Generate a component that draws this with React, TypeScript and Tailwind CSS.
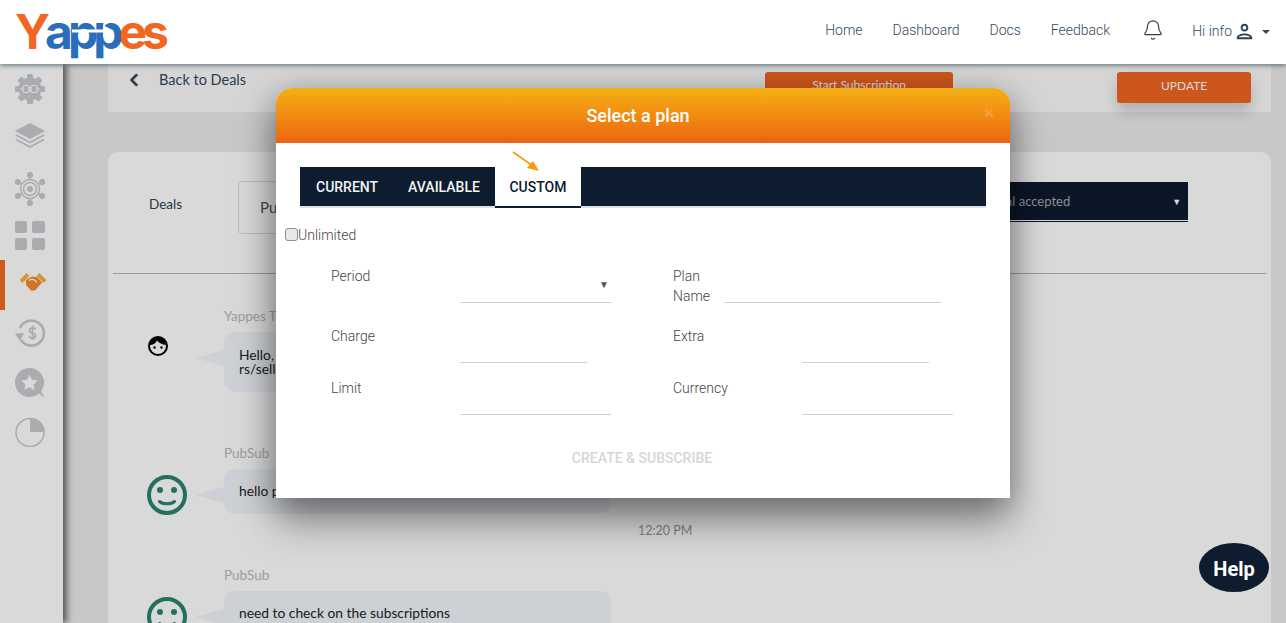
import { Bell, ChevronLeft } from "lucide-react";
import { MdOutlinePerson } from "react-icons/md";

const nav = ["Home", "Dashboard", "Docs", "Feedback"];

function Logo() {
  return (
    <div className="relative h-[64px] w-[165px] pl-[15px] font-['Inter',sans-serif]">
      <div className="flex pt-[2px] text-[48px] font-bold leading-[60px] tracking-[-5px]">
        <span className="text-[#f26522]">Y</span>
        <span className="text-[#2a6ebb]">app</span>
        <span className="text-[#f26522]">es</span>
      </div>
      <svg className="absolute left-[70px] top-[24px]" width="50" height="14" viewBox="0 0 50 14">
        <path d="M2 7H36" stroke="#fff" strokeWidth="3" />
        <path d="M33 1L44 7L33 13Z" fill="#fff" />
      </svg>
    </div>
  );
}

function GearIcon() {
  const teeth = [0, 45, 90, 135, 180, 225, 270, 315];
  return (
    <svg width="30" height="30" viewBox="0 0 30 30">
      {teeth.map((t) => (
        <rect key={t} x="12" y="0" width="6" height="7" rx="1.5" fill="#c8cace" transform={`rotate(${t} 15 15)`} />
      ))}
      <circle cx="15" cy="15" r="11.5" fill="#c8cace" />
      <rect x="8" y="11.5" width="6" height="7" rx="2" fill="none" stroke="#fff" strokeWidth="1.2" />
      <rect x="16" y="11.5" width="6" height="7" rx="2" fill="none" stroke="#fff" strokeWidth="1.2" />
      <path d="M5 15H8M14 13.5H16M14 16.5H16M22 15H25" stroke="#fff" strokeWidth="1.2" />
    </svg>
  );
}

function LayersIcon() {
  return (
    <svg width="30" height="25" viewBox="0 0 30 25">
      <path d="M15 0L30 8L15 16L0 8Z" fill="#c8cace" />
      <path d="M2 11.5L15 18.5L28 11.5L30 12.6L15 20.5L0 12.6Z" fill="#c8cace" />
      <path d="M2 16L15 23L28 16L30 17.1L15 25L0 17.1Z" fill="#c8cace" />
    </svg>
  );
}

function HubIcon() {
  const arms = [0, 60, 120, 180, 240, 300];
  return (
    <svg width="30" height="34" viewBox="0 0 30 34">
      {arms.map((a) => (
        <g key={a} transform={`rotate(${a} 15 17)`}>
          <path d="M15 17V4" stroke="#c8cace" strokeWidth="1.5" />
          <circle cx="15" cy="3" r="3" fill="#c8cace" />
        </g>
      ))}
      <circle cx="15" cy="17" r="9.5" fill="#fff" stroke="#c8cace" strokeWidth="1.5" />
      <circle cx="15" cy="17" r="6.5" fill="none" stroke="#c8cace" strokeWidth="1.5" />
      <circle cx="15" cy="17" r="3" fill="#c8cace" />
    </svg>
  );
}

function GridIcon() {
  return (
    <div className="grid w-[30px] grid-cols-[12px_13px] gap-x-[5px] gap-y-[5px]">
      <div className="h-[12px] rounded-[2px] bg-[#c8cace]" />
      <div className="h-[12px] rounded-[2px] bg-[#c8cace]" />
      <div className="h-[12px] rounded-[2px] bg-[#c8cace]" />
      <div className="h-[12px] rounded-[2px] bg-[#c8cace]" />
    </div>
  );
}

function HandshakeIcon() {
  return (
    <svg width="26" height="18" viewBox="0 0 26 18">
      <path d="M1 8.5L8 1.5" stroke="#fbb03b" strokeWidth="4" />
      <path d="M25 8.5L18 1.5" stroke="#fbb03b" strokeWidth="4" />
      <path d="M6 7L12 3.5L17 4L22 9.5L15 17.5H11L6 12Z" fill="#f58a2e" />
      <path d="M9 7.5C12 5.5 15.5 6.5 17 9.5" fill="none" stroke="#fff" strokeWidth="1.2" />
    </svg>
  );
}

function DollarIcon() {
  return (
    <svg width="30" height="28" viewBox="0 0 30 28">
      <path d="M5 9A12.5 12.5 0 1 1 6 21" fill="none" stroke="#c8cace" strokeWidth="2.6" />
      <path d="M0 14.5L9 14L5 22Z" fill="#c8cace" />
      <path d="M20.5 10.5C19.5 8.5 14.5 8.5 14.5 11.5C14.5 14.5 20.5 13.5 20.5 16.8C20.5 19.6 15.2 19.6 14 17.4" fill="none" stroke="#c8cace" strokeWidth="2" />
      <path d="M17.5 6.5V21" stroke="#c8cace" strokeWidth="1.6" />
    </svg>
  );
}

function StarBubbleIcon() {
  return (
    <svg width="30" height="30" viewBox="0 0 30 30">
      <path d="M22 24L30 30L24 20Z" fill="#c8cace" />
      <circle cx="14.5" cy="14.5" r="14.5" fill="#c8cace" />
      <path d="M14.5 6.5L17 11.8L22.8 12.5L18.5 16.4L19.7 22L14.5 19.2L9.3 22L10.5 16.4L6.2 12.5L12 11.8Z" fill="#fff" />
    </svg>
  );
}

function PieIcon() {
  return (
    <svg width="30" height="30" viewBox="0 0 30 30">
      <circle cx="15" cy="15.5" r="14" fill="none" stroke="#c8cace" strokeWidth="1.5" />
      <path d="M15 1A14 14 0 0 1 29.5 15H15Z" fill="#c8cace" />
    </svg>
  );
}

function Sidebar() {
  return (
    <aside className="relative z-[1] flex h-[559px] w-[63px] shrink-0 flex-col items-center bg-white pr-[3px] pt-[10px] shadow-[4px_0_6px_rgba(0,0,0,0.55)]">
      <GearIcon />
      <div className="mt-[19px] flex">
        <LayersIcon />
      </div>
      <div className="mt-[24px] flex">
        <HubIcon />
      </div>
      <div className="mt-[15px]">
        <GridIcon />
      </div>
      <div className="mt-[10px] flex h-[50px] w-[63px] shrink-0 items-center self-start border-l-[5px] border-[#f26a21] pl-[15px]">
        <div className="-mt-[6px] flex">
          <HandshakeIcon />
        </div>
      </div>
      <div className="mt-[9px] flex">
        <DollarIcon />
      </div>
      <div className="mt-[21px] flex">
        <StarBubbleIcon />
      </div>
      <div className="mt-[19px] flex">
        <PieIcon />
      </div>
    </aside>
  );
}

function FaceAvatar() {
  return (
    <svg width="20" height="20" viewBox="0 0 20 20">
      <circle cx="10" cy="10" r="9" fill="#fff" stroke="#000" strokeWidth="2" />
      <path d="M2 9C5 9 8 7 9 4.5C11 7 14 8.5 18 9C18 4 14 1 10 1C6 1 2 4 2 9Z" fill="#000" />
      <circle cx="6.5" cy="11.5" r="1.2" fill="#000" />
      <circle cx="13.5" cy="11.5" r="1.2" fill="#000" />
    </svg>
  );
}

function SmileAvatar() {
  return (
    <svg width="40" height="40" viewBox="0 0 40 40">
      <circle cx="20" cy="20" r="18" fill="none" stroke="#2a8470" strokeWidth="4" />
      <circle cx="13" cy="15" r="3" fill="#2a8470" />
      <circle cx="27" cy="15" r="3" fill="#2a8470" />
      <path d="M12.5 26.5C16 29.5 24 29.5 27.5 26.5" fill="none" stroke="#2a8470" strokeWidth="3" strokeLinecap="round" />
    </svg>
  );
}

function Message({
  name,
  text,
  avatar,
  avatarClass,
  bubbleClass,
}: {
  name: string;
  text: string;
  avatar: React.ReactNode;
  avatarClass: string;
  bubbleClass: string;
}) {
  return (
    <div className="flex">
      <div className={`flex w-[87px] shrink-0 justify-center ${avatarClass}`}>{avatar}</div>
      <div className="relative w-[387px]">
        <div className="mb-[8px] h-[16px] text-[13.5px] leading-[16px] text-[#b9b9b9]">{name}</div>
        <div className={`relative whitespace-pre-line rounded-[10px] bg-[#f1f5fa] px-[15px] text-[13.8px] leading-[14px] text-[#222] ${bubbleClass}`}>
          {text}
          <div className="absolute left-[-29px] top-[18px] h-0 w-0 border-y-[8px] border-r-[29px] border-y-transparent border-r-[#f1f5fa]" />
        </div>
      </div>
    </div>
  );
}

function Field({
  label,
  labelWidth,
  inputWidth,
  select,
}: {
  label: string;
  labelWidth: string;
  inputWidth: string;
  select?: boolean;
}) {
  return (
    <div className="flex h-[37px]">
      <div className={`shrink-0 text-[14px] font-light leading-[20px] text-[#444] ${labelWidth}`}>{label}</div>
      <div className={`relative h-full border-b border-[#d0d0d0] ${inputWidth}`}>
        {select && <span className="absolute right-[3px] top-[12px] text-[10px] leading-[14px] text-[#555]">▼</span>}
      </div>
    </div>
  );
}

function PlanModal() {
  return (
    <div className="absolute left-[276px] top-[88px] z-20 h-[410px] w-[734px] rounded-t-[16px] bg-white font-['Roboto',sans-serif] shadow-[0_22px_40px_rgba(0,0,0,0.42),0_4px_30px_rgba(0,0,0,0.2)]">
      <div className="relative flex h-[55px] items-center justify-center rounded-t-[16px] bg-gradient-to-b from-[#f4b015] to-[#ec630f] pr-[10px] text-[18px] font-medium text-white">
        Select a plan
        <span className="absolute right-[16px] top-[14px] text-[19px] font-bold leading-[22px] text-[#f3a03c]">×</span>
      </div>

      <div className="relative mx-[24px] mt-[24px] flex h-[41px] border-b-2 border-[#e0e1e5] bg-[#0d1c2f] text-[14px] font-medium">
        <div className="flex h-[39px] items-center px-[16px] pt-[1px] text-[#f2f3f5]">CURRENT</div>
        <div className="flex h-[39px] items-center px-[14px] pt-[1px] text-[#f2f3f5]">AVAILABLE</div>
        <div className="-mb-[2px] ml-[1px] flex h-[41px] w-[86px] items-center justify-center border-b-2 border-[#0d1c2f] bg-white pt-[1px] text-[#0d1c2f]">
          CUSTOM
        </div>
        <svg className="absolute left-[212px] top-[-16px]" width="30" height="24" viewBox="0 0 30 24">
          <path d="M1 1L21 15" stroke="#f79a0e" strokeWidth="1.6" />
          <path d="M27 20L15 17L21 10Z" fill="#f79a0e" />
        </svg>
      </div>

      <label className="ml-[9px] mt-[19px] flex h-[16px] items-center text-[14px] font-light text-[#444]">
        <input type="checkbox" className="m-0 -mt-[2px] h-[13px] w-[13px] appearance-none rounded-[3px] border border-[#8f8f8f] bg-[#e8e8e8]" />
        <span>Unlimited</span>
      </label>

      <div className="ml-[55px] mt-[23px] grid grid-cols-[342px_1fr]">
        <Field label="Period" labelWidth="w-[129px]" inputWidth="w-[152px]" select />
        <Field label="Plan Name" labelWidth="w-[51px]" inputWidth="w-[217px]" />
        <div className="mt-[23px]">
          <Field label="Charge" labelWidth="w-[129px]" inputWidth="w-[127px]" />
        </div>
        <div className="mt-[23px]">
          <Field label="Extra" labelWidth="w-[129px]" inputWidth="w-[127px]" />
        </div>
        <div className="mt-[15px]">
          <Field label="Limit" labelWidth="w-[129px]" inputWidth="w-[151px]" />
        </div>
        <div className="mt-[15px]">
          <Field label="Currency" labelWidth="w-[129px]" inputWidth="w-[151px]" />
        </div>
      </div>

      <div className="mt-[34px] pr-[2px] text-center text-[14px] font-medium leading-[18px] text-[#d6d6d6]">CREATE &amp; SUBSCRIBE</div>
    </div>
  );
}

export default function App() {
  return (
    <div className="relative h-[623px] w-[1286px] overflow-hidden bg-[#ebebeb] font-['Lato',sans-serif]">
      <header className="relative z-30 flex h-[64px] items-center justify-between bg-white pr-[16px] font-['Roboto',sans-serif] shadow-[0_2px_4px_rgba(60,80,95,0.6)]">
        <Logo />
        <div className="-mt-[4px] flex items-center text-[14px] font-light text-[#34495e]">
          <nav className="flex gap-[30px]">
            {nav.map((n) => (
              <span key={n}>{n}</span>
            ))}
          </nav>
          <Bell className="ml-[32px] text-[#2c3e50]" size={22} strokeWidth={1.3} />
          <span className="ml-[28px] mt-[2px]">Hi info</span>
          <MdOutlinePerson className="ml-[1px] mt-[2px] text-[#2c3e50]" size={23} />
          <span className="ml-[6px] mt-[4px] h-0 w-0 border-x-[4.5px] border-t-[4.5px] border-x-transparent border-t-[#34495e]" />
        </div>
      </header>

      <div className="flex">
        <Sidebar />
        <main className="ml-[45px] w-[1163px]">
          <div className="flex h-[48px] bg-[#fbfbfb] text-[14.5px] text-[#34495e]">
            <ChevronLeft className="ml-[16px] mt-[6px]" size={20} strokeWidth={3} />
            <span className="ml-[15px] mt-[5px]">Back to Deals</span>
            <div className="ml-[519px] mt-[8px] flex h-[31px] w-[188px] items-start justify-center rounded-[3px] bg-[#f16621] pt-[4px] text-[12px] text-white">
              Start Subscription
            </div>
            <div className="ml-[164px] mt-[8px] flex h-[31px] w-[134px] items-start justify-center rounded-[3px] bg-[#f16621] pt-[5px] text-[12px] text-white shadow-[0_8px_14px_rgba(0,0,0,0.18)]">
              UPDATE
            </div>
          </div>

          <div className="mt-[40px] h-[600px] rounded-[10px] bg-white">
            <div className="mx-[5px] flex h-[122px] border-b border-[#b5b5b5]">
              <span className="ml-[36px] mt-[42px] text-[13.5px] text-[#2c3e50]">Deals</span>
              <div className="ml-[56px] mt-[29px] h-[53px] w-[300px] shrink-0 rounded-[4px] border border-[#dcdcdc] pl-[21px] pt-[14px] text-[15px] text-[#555]">
                PubSub
              </div>
              <div className="ml-[362px] mt-[30px] flex h-[38px] w-[288px] shrink-0 items-center justify-between bg-[#0d1a2f] pl-[66px] pr-[7px] pt-[2px] text-[13px] text-[#a9a9a9] shadow-[0_1px_0_#fff,0_2px_0_#0d1a2f]">
                <span>Proposal accepted</span>
                <span className="text-[9px] text-white">▼</span>
              </div>
            </div>

            <div className="ml-[29px] mt-[34px]">
              <Message
                name="Yappes Team"
                text={"Hello,\nrs/seller"}
                avatar={<FaceAvatar />}
                avatarClass="pt-[28px] pr-[45px]"
                bubbleClass="h-[60px] pt-[16px]"
              />
              <div className="mt-[53px]">
                <Message
                  name="PubSub"
                  text="hello p"
                  avatar={<SmileAvatar />}
                  avatarClass="pt-[30px] pr-[27px]"
                  bubbleClass="h-[45px] pt-[15px]"
                />
              </div>
              <div className="ml-[501px] mt-[8px] h-[16px] text-[12.5px] leading-[16px] text-[#999]">12:20 PM</div>
              <div className="mt-[28px]">
                <Message
                  name="PubSub"
                  text="need to check on the subscriptions"
                  avatar={<SmileAvatar />}
                  avatarClass="pt-[30px] pr-[27px]"
                  bubbleClass="h-[60px] pt-[15px]"
                />
              </div>
            </div>
          </div>
        </main>
      </div>

      <div className="absolute inset-0 z-10 bg-black/15" />
      <PlanModal />

      <div className="absolute left-[1199px] top-[543px] z-30 flex h-[49px] w-[70px] items-center justify-center rounded-[50%] bg-[#0d1c2f] pt-[3px] font-['Roboto',sans-serif] text-[20px] font-bold text-white">
        Help
      </div>
    </div>
  );
}
